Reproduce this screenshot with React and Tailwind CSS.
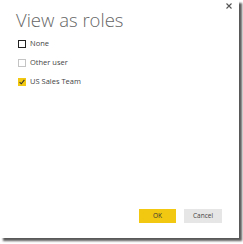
export default function App() {
  const roles = [
    { name: "None", state: "focus" },
    { name: "Other user", state: "off" },
    { name: "US Sales Team", state: "on" },
  ];

  return (
    <div className="w-[243px] h-[244px] bg-white">
      <div
        className="relative flex flex-col w-[239px] h-[238px] bg-white shadow-[3px_3px_2px_0px_rgba(0,0,0,0.65)]"
        style={{ fontFamily: '"Open Sans", "Liberation Sans", sans-serif' }}
      >
        <button className="absolute top-[3px] right-[7px] text-[#555] leading-none">
          <svg width="6" height="6" viewBox="0 0 6 6" className="block">
            <path d="M0.5 0.5L5.5 5.5M5.5 0.5L0.5 5.5" stroke="#555" strokeWidth="1.1" />
          </svg>
        </button>

        <h1 className="pl-[16px] pt-[10px] text-[18.5px] leading-[20px] font-light text-[#666]">
          View as roles
        </h1>

        <div className="flex flex-col gap-[10px] pl-[18px] pt-[9px]">
          {roles.map((r) => (
            <label key={r.name} className="flex items-center gap-[4px] h-[9px]">
              {r.state === "focus" && (
                <span className="w-[8px] h-[8px] border-[1.5px] border-[#222] bg-white" />
              )}
              {r.state === "off" && (
                <span className="w-[8px] h-[8px] border border-[#c4c4c4] bg-white" />
              )}
              {r.state === "on" && (
                <span className="flex items-center justify-center w-[8px] h-[8px] bg-[#f2c811]">
                  <svg width="6" height="6" viewBox="0 0 6 6">
                    <path d="M0.6 3.2L2.3 4.8L5.4 0.9" fill="none" stroke="#333" strokeWidth="1.1" />
                  </svg>
                </span>
              )}
              <span className="text-[7.5px] leading-[9px] text-[#444]">{r.name}</span>
            </label>
          ))}
        </div>

        <div className="mt-auto flex justify-end gap-[8px] pr-[17px] pb-[15px]">
          <button className="w-[37px] h-[14px] bg-[#f2c811] text-[6.5px] text-[#333] leading-none">
            OK
          </button>
          <button className="w-[38px] h-[14px] bg-[#e6e6e6] text-[6.5px] text-[#444] leading-none">
            Cancel
          </button>
        </div>
      </div>
    </div>
  );
}
